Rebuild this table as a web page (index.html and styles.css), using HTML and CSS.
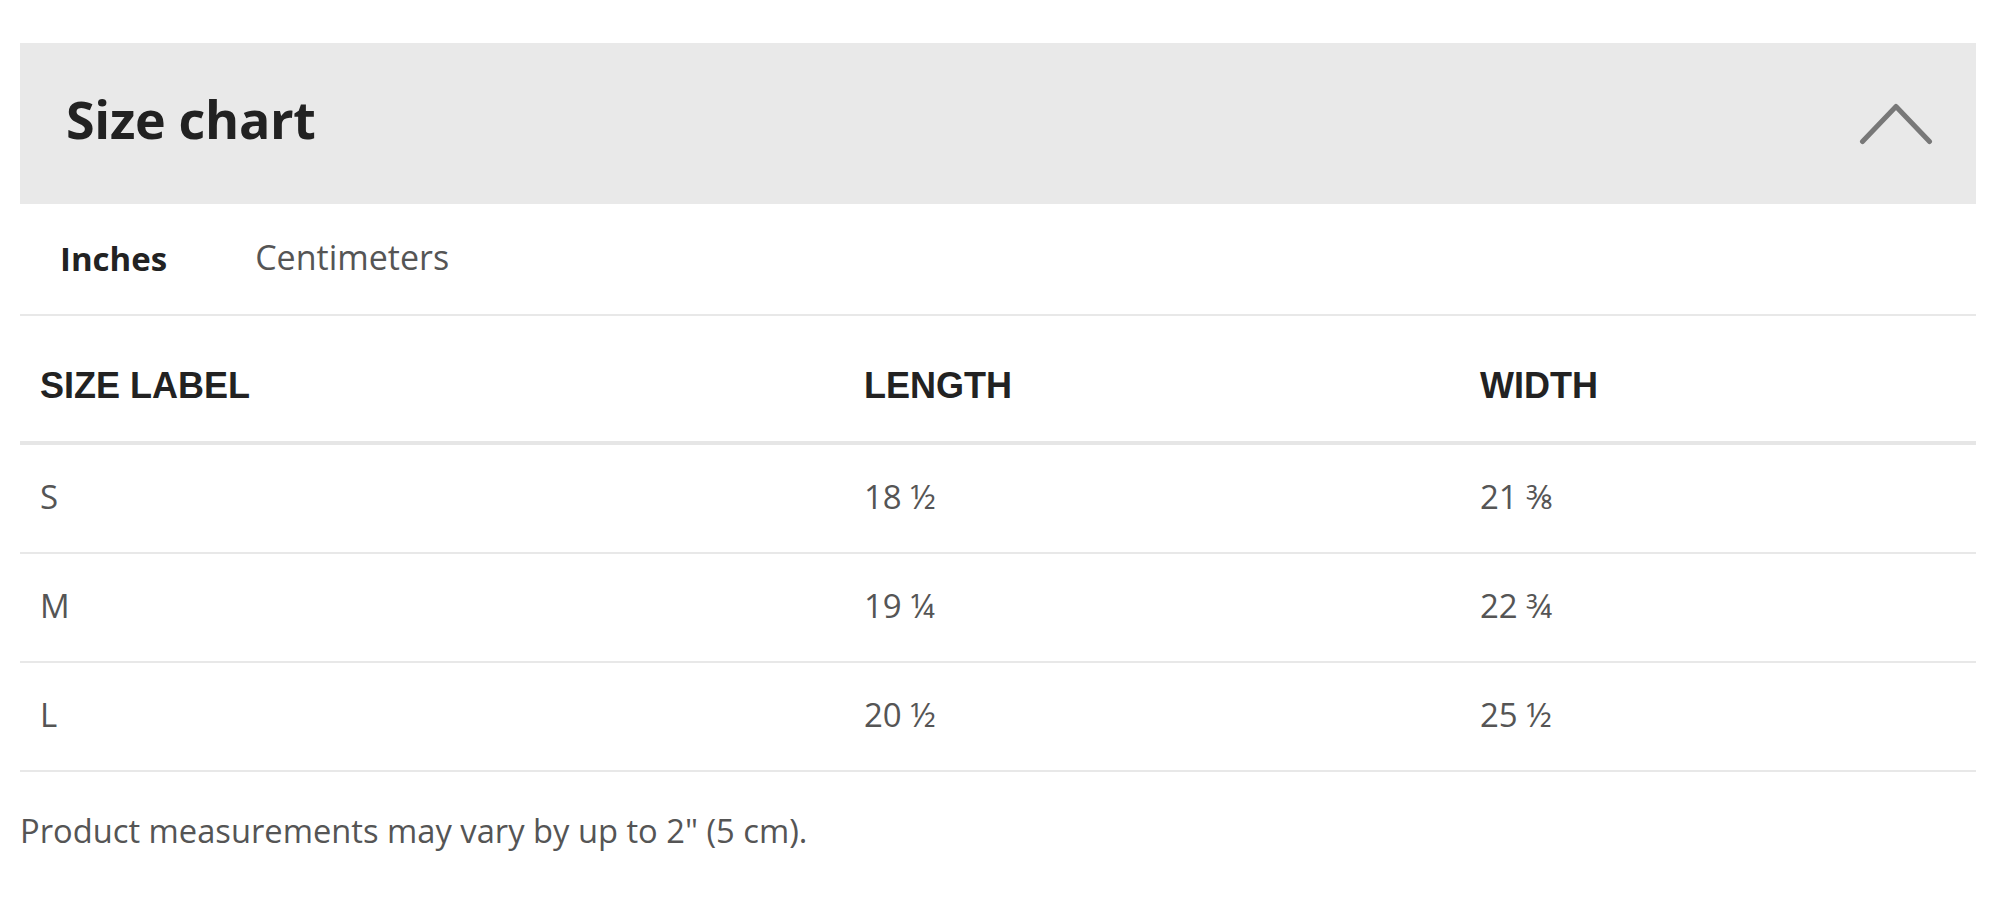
FILE: index.html
```html
<!DOCTYPE html>
<html lang="en">
<head>
<meta charset="utf-8">
<title>Size chart</title>
<link rel="stylesheet" href="styles.css">
</head>
<body>
<section class="size-chart">
  <header class="sc-header">
    <h2 class="sc-title">Size chart</h2>
    <svg class="sc-chevron" width="74" height="42" viewBox="0 0 74 42" aria-hidden="true">
      <polyline points="3.5,38.5 37,3.5 70.5,38.5" fill="none" stroke="#787878" stroke-width="5" stroke-linecap="round" stroke-linejoin="round"/>
    </svg>
  </header>
  <nav class="sc-tabs">
    <span class="sc-tab active">Inches</span>
    <span class="sc-tab">Centimeters</span>
  </nav>
  <div class="sc-table">
    <div class="sc-row sc-head">
      <div class="sc-cell">SIZE LABEL</div>
      <div class="sc-cell">LENGTH</div>
      <div class="sc-cell">WIDTH</div>
    </div>
    <div class="sc-row">
      <div class="sc-cell">S</div>
      <div class="sc-cell">18 ½</div>
      <div class="sc-cell">21 ⅜</div>
    </div>
    <div class="sc-row">
      <div class="sc-cell">M</div>
      <div class="sc-cell">19 ¼</div>
      <div class="sc-cell">22 ¾</div>
    </div>
    <div class="sc-row">
      <div class="sc-cell">L</div>
      <div class="sc-cell">20 ½</div>
      <div class="sc-cell">25 ½</div>
    </div>
  </div>
  <p class="sc-note">Product measurements may vary by up to 2" (5 cm).</p>
</section>
</body>
</html>
```
FILE: styles.css
```css
html, body {
  margin: 0;
  padding: 0;
  background: #ffffff;
}

body {
  font-family: "Open Sans", "Liberation Sans", sans-serif;
  color: #555555;
}

.size-chart {
  margin: 43px 24px 0 20px;
}

.sc-header {
  height: 161px;
  background: #e9e9e9;
  display: flex;
  align-items: center;
  justify-content: space-between;
  padding: 0 43px 0 46px;
  box-sizing: border-box;
}

.sc-title {
  margin: 0 0 9px 0;
  font-family: "Open Sans", sans-serif;
  font-weight: 700;
  font-size: 52px;
  line-height: 1;
  color: #222222;
  letter-spacing: -0.3px;
}

.sc-chevron {
  display: block;
}

.sc-tabs {
  height: 110px;
  display: flex;
  align-items: center;
  gap: 88px;
  padding-left: 40px;
  border-bottom: 2px solid #e8e8e8;
}

.sc-tab {
  font-size: 34px;
  line-height: 1;
  color: #555555;
  padding-bottom: 5px;
}

.sc-tab.active {
  font-size: 33px;
  font-weight: 700;
  color: #222222;
  padding-top: 0;
  padding-bottom: 2px;
}

.sc-row {
  display: grid;
  grid-template-columns: 824px 616px 1fr;
  height: 107px;
  align-items: center;
  border-bottom: 2px solid #e8e8e8;
}

.sc-cell {
  padding-left: 20px;
  padding-bottom: 5px;
  font-size: 33px;
  line-height: 1;
  color: #555555;
}

.sc-row.sc-head {
  height: 125px;
  border-bottom: 4px solid #e6e6e6;
}

.sc-head .sc-cell {
  font-family: "Liberation Sans", Arial, sans-serif;
  font-weight: 700;
  font-size: 36px;
  color: #222222;
  padding-top: 14px;
  padding-bottom: 0;
}

.sc-note {
  margin: 36px 0 0 0;
  font-size: 32.7px;
  line-height: 45px;
  color: #555555;
}
```
